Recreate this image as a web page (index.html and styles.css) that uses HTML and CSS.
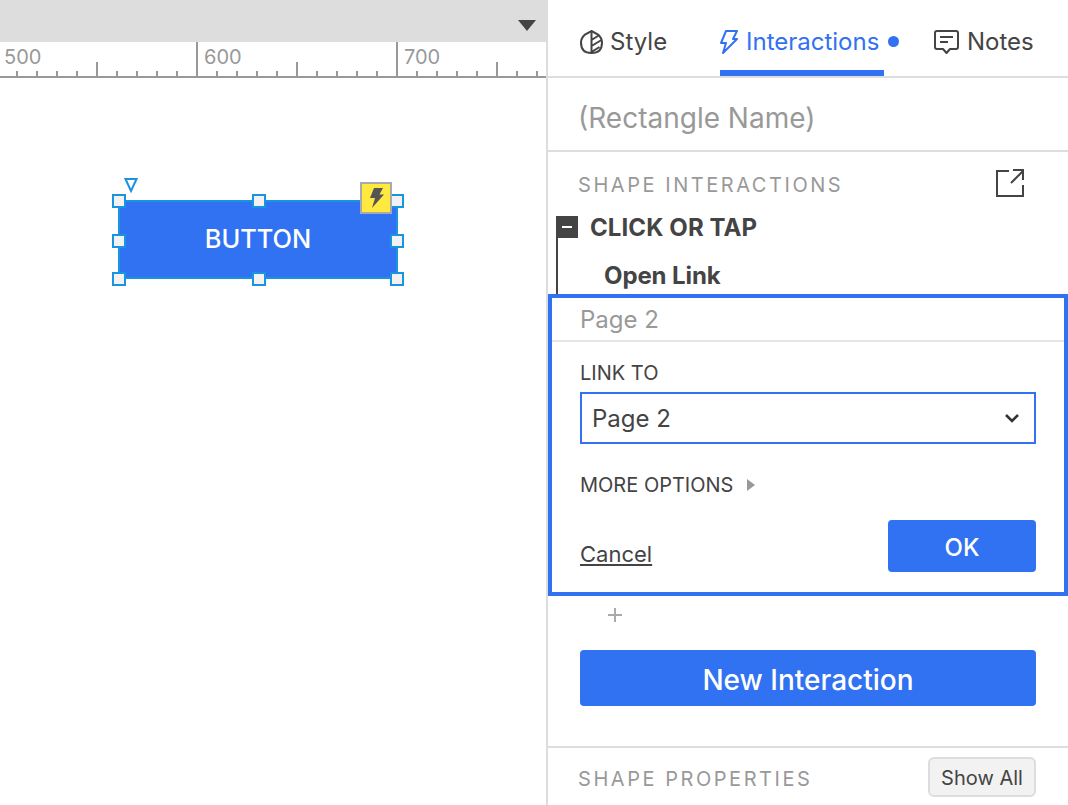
FILE: index.html
```html
<!DOCTYPE html>
<html lang="en">
<head>
<meta charset="utf-8">
<title>Interactions</title>
<link rel="stylesheet" href="styles.css">
</head>
<body>
<div class="app">
  <main class="workspace">
    <div class="topbar"><svg class="caret" width="18" height="11" viewBox="0 0 18 11"><path d="M0 0h18l-9 11z" fill="#444"/></svg></div>
    <svg class="ruler" width="546" height="36" viewBox="0 0 546 36">
      <g class="ruler-text">
        <text x="4" y="22">500</text>
        <text x="204" y="22">600</text>
        <text x="404" y="22">700</text>
      </g>
      <path class="ruler-line" d="M0 35h546M17 35v-6M37 35v-6M57 35v-6M77 35v-6M97 35v-15M117 35v-6M137 35v-6M157 35v-6M177 35v-6M197 35V0M217 35v-6M237 35v-6M257 35v-6M277 35v-6M297 35v-15M317 35v-6M337 35v-6M357 35v-6M377 35v-6M397 35V0M417 35v-6M437 35v-6M457 35v-6M477 35v-6M497 35v-15M517 35v-6M537 35v-6"/>
    </svg>
    <div class="canvas">
      <svg class="flow-marker" width="14" height="15" viewBox="0 0 14 15"><path d="M1.500 1h11L7 13z" fill="#fff" stroke="#1a94e0" stroke-width="2"/></svg>
      <div class="shape">BUTTON</div>
      <span class="handle h-tl"></span><span class="handle h-tc"></span><span class="handle h-tr"></span>
      <span class="handle h-ml"></span><span class="handle h-mr"></span>
      <span class="handle h-bl"></span><span class="handle h-bc"></span><span class="handle h-br"></span>
      <div class="badge"><svg width="15" height="20" viewBox="0 0 15 20"><path d="M5 0h9l-3.500 6.500H15L3 20l3-10H1z" fill="#555"/></svg></div>
    </div>
  </main>
  <aside class="panel">
    <nav class="tabs">
      <div class="tab tab-style">
        <svg width="23" height="24" viewBox="0 0 23 24" fill="none" stroke="#444" stroke-width="2"><path d="M11.500 1 L18 4.500 Q22 8 22 12.500 Q22 23 11.500 23 Q1 23 1 12.500 Q1 8 5 4.500z"/><path d="M11.500 1v22M11.500 10l8-5M11.500 16l10-6M11.500 22l8-5"/></svg>
        <span>Style</span>
      </div>
      <div class="tab tab-active">
        <svg width="18" height="24" viewBox="0 0 18 24" fill="none" stroke="#3072f2" stroke-width="2" stroke-linejoin="round"><path d="M6 1h11l-4 8h4L3 23l3-10H1z"/></svg>
        <span>Interactions</span>
        <i class="tab-dot"></i>
      </div>
      <div class="tab tab-notes">
        <svg width="25" height="24" viewBox="0 0 25 24" fill="none" stroke="#444" stroke-width="2" stroke-linejoin="round"><path d="M3 1h19a2 2 0 0 1 2 2v14a2 2 0 0 1-2 2h-6l-3.500 4-3.500-4H3a2 2 0 0 1-2-2V3a2 2 0 0 1 2-2z"/><path d="M6 7h13M6 12h8"/></svg>
        <span>Notes</span>
      </div>
    </nav>
    <div class="name-row">(Rectangle Name)</div>
    <div class="section-head">
      <span class="section-title">SHAPE INTERACTIONS</span>
      <svg width="28" height="28" viewBox="0 0 28 28" fill="none" stroke="#444" stroke-width="2"><path d="M13 2H1v25h26V16M15 14 27 2M17 1h10v10"/></svg>
    </div>
    <div class="event-row">
      <span class="collapse"><i></i></span>
      <strong class="event-name">CLICK OR TAP</strong>
    </div>
    <div class="action-row"><strong>Open Link</strong></div>
    <section class="editor">
      <div class="editor-title">Page 2</div>
      <div class="editor-body">
        <label class="field-label">LINK TO</label>
        <div class="select">
          <span>Page 2</span>
          <svg width="16" height="10" viewBox="0 0 16 10" fill="none" stroke="#333" stroke-width="2.500"><path d="M2 2l6 6 6-6"/></svg>
        </div>
        <div class="more"><span>MORE OPTIONS</span><i class="more-arrow"></i></div>
        <div class="editor-actions">
          <a class="cancel">Cancel</a>
          <button class="btn btn-ok">OK</button>
        </div>
      </div>
    </section>
    <div class="add-row"><svg width="14" height="14" viewBox="0 0 14 14"><path d="M7 0v14M0 7h14" stroke="#aaa" stroke-width="2"/></svg></div>
    <div class="new-row"><button class="btn btn-new">New Interaction</button></div>
    <div class="props-head">
      <span class="section-title">SHAPE PROPERTIES</span>
      <button class="show-all">Show All</button>
    </div>
  </aside>
</div>
</body>
</html>
```
FILE: styles.css
```css
* { box-sizing: border-box; }
html, body { margin: 0; height: 100%; overflow: hidden; background: #fff; }
body { font-family: Inter, "Liberation Sans", sans-serif; color: #444; }
.app { display: flex; width: 1068px; height: 805px; }

/* Left side */
.workspace { width: 546px; flex: none; display: flex; flex-direction: column; }
.topbar { height: 42px; background: #ddd; display: flex; justify-content: flex-end; align-items: flex-start; padding: 20px 10px 0 0; }
.caret { display: block; }
.ruler { display: block; flex: none; }
.ruler-text { font-family: Inter, sans-serif; font-size: 20px; fill: #999; }
.ruler-line { stroke: #999; stroke-width: 2; fill: none; }
.canvas { position: relative; flex: 1; }
.shape { position: absolute; left: 118px; top: 122px; width: 280px; height: 79px; background: #3072f2; border: 2px solid #1a94e0; color: #fff; font-size: 25.400px; font-weight: 500; padding-bottom: 2px; display: flex; align-items: center; justify-content: center; }
.flow-marker { position: absolute; left: 124px; top: 100px; }
.handle { position: absolute; width: 14px; height: 14px; margin: -7px 0 0 -7px; background: #f2f2f2; border: 2px solid #1a94e0; }
.h-tl { left: 119px; top: 123px; }
.h-tc { left: 259px; top: 123px; }
.h-tr { left: 397px; top: 123px; }
.h-ml { left: 119px; top: 163px; }
.h-mr { left: 397px; top: 163px; }
.h-bl { left: 119px; top: 201px; }
.h-bc { left: 259px; top: 201px; }
.h-br { left: 397px; top: 201px; }
.badge { position: absolute; left: 360px; top: 104px; width: 32px; height: 32px; background: #ffe840; border: 2px solid #aaa; display: flex; align-items: center; justify-content: center; }

/* Panel */
.panel { width: 522px; flex: none; border-left: 2px solid #ddd; display: flex; flex-direction: column; }
.tabs { height: 78px; border-bottom: 2px solid #ddd; display: flex; align-items: stretch; flex: none; font-size: 24px; }
.tab { display: flex; align-items: center; height: 76px; padding-top: 8px; }
.tab span { line-height: 28px; }
.tab-style { margin-left: 32px; gap: 7px; width: 140px; flex: none; }
.tab-active { position: relative; width: 164px; flex: none; gap: 8px; color: #3072f2; border-bottom: 6px solid #3072f2; padding-top: 14px; }
.tab-dot { position: absolute; left: 168px; top: 36px; width: 11px; height: 11px; border-radius: 50%; background: #3072f2; }
.tab-notes { margin-left: 50px; gap: 8px; }
.name-row { height: 74px; flex: none; border-bottom: 2px solid #ddd; padding: 22px 0 0 30px; font-size: 28px; line-height: 36px; color: #999; }
.section-head { height: 64px; flex: none; display: flex; justify-content: space-between; align-items: flex-start; padding: 17px 44px 0 30px; }
.section-title { font-size: 20px; letter-spacing: 2.550px; color: #999; line-height: 32px; }
.event-row { height: 22px; flex: none; display: flex; align-items: center; margin-left: 8px; gap: 12px; }
.collapse { width: 22px; height: 22px; background: #444; display: flex; align-items: center; justify-content: center; flex: none; }
.collapse i { display: block; width: 10px; height: 2px; background: #fff; }
.event-name { font-size: 24px; font-weight: 700; line-height: 24px; letter-spacing: 0.100px; padding-top: 2px; color: #444; }
.action-row { height: 56px; flex: none; margin-left: 8px; border-left: 2px solid #444; padding: 24px 0 0 46px; font-size: 24px; line-height: 28px; letter-spacing: -0.100px; color: #444; }
.editor { height: 302px; flex: none; border: 4px solid #3072f2; display: flex; flex-direction: column; }
.editor-title { height: 44px; flex: none; border-bottom: 2px solid #e6e6e6; padding: 7px 0 0 28px; font-size: 24px; line-height: 30px; color: #999; }
.editor-body { padding: 18px 28px 0; display: flex; flex-direction: column; }
.field-label { font-size: 20px; line-height: 26px; display: block; }
.select { margin-top: 6px; height: 52px; border: 2px solid #3072f2; display: flex; align-items: center; justify-content: space-between; padding: 0 14px 0 10px; font-size: 24px; }
.more { margin-top: 28px; height: 26px; display: flex; align-items: center; gap: 14px; font-size: 20px; }
.more-arrow { width: 0; height: 0; border-left: 8px solid #999; border-top: 6px solid transparent; border-bottom: 6px solid transparent; }
.editor-actions { margin-top: 22px; display: flex; justify-content: space-between; align-items: flex-start; }
.cancel { margin-top: 20px; font-size: 22px; line-height: 28px; text-decoration: underline; color: #444; }
.btn { border: 0; border-radius: 4px; background: #3072f2; color: #fff; font-family: inherit; font-weight: 500; padding: 0; }
.btn-ok { width: 148px; height: 52px; font-size: 24px; padding-top: 2px; }
.add-row { height: 54px; flex: none; padding: 12px 0 0 60px; }
.add-row svg { display: block; }
.new-row { flex: none; padding: 0 32px; height: 98px; border-bottom: 2px solid #ddd; }
.btn-new { width: 456px; height: 56px; font-size: 28px; padding-top: 3px; }
.props-head { flex: none; display: flex; justify-content: space-between; align-items: flex-start; padding: 9px 32px 0 30px; }
.props-head .section-title { margin-top: 6px; }
.show-all { width: 108px; height: 40px; background: #f2f2f2; border: 2px solid #ddd; border-radius: 6px; font-family: inherit; font-size: 20px; color: #444; padding: 2px 0 0; }
```
